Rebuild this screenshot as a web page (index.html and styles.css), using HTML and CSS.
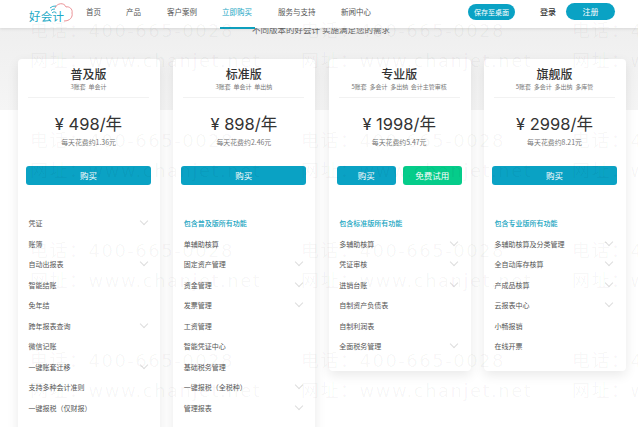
FILE: index.html
```html
<!DOCTYPE html>
<html lang="zh-CN">
<head>
<meta charset="utf-8">
<title>好会计 立即购买</title>
<link rel="stylesheet" href="styles.css">
</head>
<body>
<header class="nav">
  <svg class="logo-mark" viewBox="0 0 48 24" width="48" height="24" aria-hidden="true">
    <path d="M27 6 C29 1 36 0 38 5 C41 4 45 7 44 11 C45 15 42 19 36 19" fill="none" stroke="#e8848a" stroke-width=".9"/>
    <path d="M22 6 a8 8 0 0 1 6 -2 M23 8.500 a5 5 0 0 1 4 -1.500 M24 11 a2.500 2.500 0 0 1 2.500 -1" fill="none" stroke="#17a6c4" stroke-width=".9"/>
  </svg>
  <span class="logo-text">好会计</span>
  <nav class="menu">
    <a class="menu-item m1">首页</a>
    <a class="menu-item m2">产品</a>
    <a class="menu-item m3">客户案例</a>
    <a class="menu-item m4 active">立即购买</a>
    <a class="menu-item m5">服务与支持</a>
    <a class="menu-item m6">新闻中心</a>
  </nav>
  <i class="underline"></i>
  <span class="save-btn">保存至桌面</span>
  <span class="login">登录</span>
  <span class="register">注册</span>
</header>
<section class="band">
  <p class="slogan">不同版本的好会计 实施满足您的需求</p>
</section>
<main class="cards">
  <article class="card">
    <h2>普及版</h2><p class="sub">3账套&nbsp;&nbsp;单会计</p><hr>
    <p class="price">¥ 498/年</p><p class="daily">每天花费约1.36元</p>
    <div class="actions"><a class="btn">购买</a></div>
    <ul class="features">
      <li class="more">凭证</li><li>账簿</li><li class="more">自动出报表</li><li>智能结账</li><li>免年结</li>
      <li class="more">跨年报表查询</li><li>微信记账</li><li class="more">一键账套迁移</li><li>支持多种会计准则</li><li>一键报税（仅财报）</li>
    </ul>
  </article>
  <article class="card">
    <h2>标准版</h2><p class="sub">3账套&nbsp;&nbsp;单会计&nbsp;&nbsp;单出纳</p><hr>
    <p class="price">¥ 898/年</p><p class="daily">每天花费约2.46元</p>
    <div class="actions"><a class="btn">购买</a></div>
    <ul class="features">
      <li class="incl">包含普及版所有功能</li><li>单辅助核算</li><li class="more">固定资产管理</li><li class="more">资金管理</li><li class="more">发票管理</li>
      <li>工资管理</li><li>智能凭证中心</li><li>基础税务管理</li><li class="more">一键报税（全税种）</li><li class="more">管理报表</li>
    </ul>
  </article>
  <article class="card">
    <h2>专业版</h2><p class="sub">5账套&nbsp;&nbsp;多会计&nbsp;&nbsp;多出纳&nbsp;&nbsp;会计主管审核</p><hr>
    <p class="price">¥ 1998/年</p><p class="daily">每天花费约5.47元</p>
    <div class="actions"><a class="btn">购买</a><a class="btn green">免费试用</a></div>
    <ul class="features">
      <li class="incl">包含标准版所有功能</li><li class="more">多辅助核算</li><li class="more">凭证审核</li><li class="more">进销台账</li><li>自制资产负债表</li>
      <li>自制利润表</li><li class="more">全面税务管理</li>
    </ul>
  </article>
  <article class="card">
    <h2>旗舰版</h2><p class="sub">5账套&nbsp;&nbsp;多会计&nbsp;&nbsp;多出纳&nbsp;&nbsp;多库管</p><hr>
    <p class="price">¥ 2998/年</p><p class="daily">每天花费约8.21元</p>
    <div class="actions"><a class="btn">购买</a></div>
    <ul class="features">
      <li class="incl">包含专业版所有功能</li><li class="more">多辅助核算及分类管理</li><li class="more">全自动库存核算</li><li class="more">产成品核算</li><li class="more">云报表中心</li>
      <li>小畅报销</li><li>在线开票</li>
    </ul>
  </article>
</main>
<div class="watermark" aria-hidden="true">
  <div class="wm"><b>电话：400-665-0028</b><b>网址：www.chanjet.net</b></div>
  <div class="wm"><b>电话：400-665-0028</b><b>网址：www.chanjet.net</b></div>
  <div class="wm"><b>电话：400-665-0028</b><b>网址：www.chanjet.net</b></div>
  <div class="wm"><b>电话：400-665-0028</b><b>网址：www.chanjet.net</b></div>
  <div class="wm"><b>电话：400-665-0028</b><b>网址：www.chanjet.net</b></div>
  <div class="wm"><b>电话：400-665-0028</b><b>网址：www.chanjet.net</b></div>
  <div class="wm"><b>电话：400-665-0028</b><b>网址：www.chanjet.net</b></div>
  <div class="wm"><b>电话：400-665-0028</b><b>网址：www.chanjet.net</b></div>
  <div class="wm"><b>电话：400-665-0028</b><b>网址：www.chanjet.net</b></div>
  <div class="wm"><b>电话：400-665-0028</b><b>网址：www.chanjet.net</b></div>
  <div class="wm"><b>电话：400-665-0028</b><b>网址：www.chanjet.net</b></div>
  <div class="wm"><b>电话：400-665-0028</b><b>网址：www.chanjet.net</b></div>
</div>
</body>
</html>
```
FILE: styles.css
```css
* { box-sizing: border-box; margin: 0; padding: 0; }
html, body { height: 427px; overflow: hidden; }
body {
  position: relative;
  width: 638px;
  background: #fff;
  font-family: "Noto Sans CJK SC", "Noto Sans", sans-serif;
  color: #333;
}
.nav {
  position: relative;
  z-index: 2;
  height: 28px;
  background: #fff;
  box-shadow: 0 1px 3px rgba(0,0,0,.1);
}
.nav > *, .menu-item { position: absolute; }
.logo-mark { left: 28px; top: 2px; }
.logo-text { left: 29px; top: 8px; font-size: 11.5px; line-height: 16px; color: #22a9c6; letter-spacing: .3px; }
.menu-item { top: 4.5px; font-size: 7.5px; line-height: 14px; color: #555; white-space: nowrap; }
.m1 { left: 86px; } .m2 { left: 126px; } .m3 { left: 167px; } .m4 { left: 222px; } .m5 { left: 278px; } .m6 { left: 341px; }
.active { color: #17a6c4; }
.underline { left: 220px; top: 27px; width: 35px; height: 2px; background: #0e9fbd; }
.save-btn {
  left: 468px; top: 4px; width: 47px; height: 16px;
  background: #0aa2c4; color: #fff; border-radius: 8px;
  font-size: 7px; line-height: 16px; text-align: center;
}
.login { left: 540px; top: 5px; font-size: 8px; line-height: 14px; color: #333; font-weight: 500; }
.register {
  left: 566px; top: 3px; width: 49px; height: 17px;
  background: #0aa2c4; color: #fff; border-radius: 9px;
  font-size: 8px; line-height: 17px; text-align: center;
}
.band {
  position: relative;
  height: 82px;
  margin-bottom: -82px;
  background: linear-gradient(#efefef, #f5f5f5);
}
.slogan { position: absolute; top: -5px; left: 252px; font-size: 8.5px; line-height: 12px; color: #666; white-space: nowrap; }
.cards {
  position: relative;
  display: flex;
  gap: 13.33px;
  padding: 31px 0 0 18px;
}
.card {
  flex: none;
  width: 142px;
  height: 312px;
  padding: 6px 9px 0 8px;
  background: #fff;
  border-radius: 4px;
  box-shadow: 0 4px 12px rgba(0,0,0,.09);
}
.card:nth-child(-n+2) { height: 420px; }
.card h2 { font-size: 12px; line-height: 17px; font-weight: 500; text-align: center; color: #333; }
.sub { margin-top: 0; font-size: 6px; line-height: 9px; text-align: center; color: #777; white-space: nowrap; }
.card hr { margin: 6px 2px 0; border: 0; border-top: 1px solid #f2f2f2; }
.price { margin-top: 16px; font-family: "Inter", "Noto Sans CJK SC", sans-serif; font-size: 16.5px; line-height: 20px; text-align: center; color: #333; white-space: nowrap; }
.daily { margin-top: 3px; font-size: 6.9px; line-height: 10px; text-align: center; color: #777; }
.actions { display: flex; gap: 7px; margin-top: 19px; }
.btn {
  flex: 1;
  height: 19px;
  background: #0aa2c4;
  border-radius: 3px;
  color: #fff;
  font-size: 8.5px;
  line-height: 19px;
  text-align: center;
}
.green { background: #05cc8a; }
.features { list-style: none; margin-top: 28px; padding: 0 2px 0 2.500px; }
.features li {
  position: relative;
  height: 20.500px;
  font-size: 7px;
  line-height: 20.500px;
  color: #555;
  white-space: nowrap;
}
.features .incl { color: #14a3c0; font-weight: 500; }
.features .more::after {
  content: "";
  position: absolute;
  right: 2.500px;
  top: 5px;
  width: 5px;
  height: 5px;
  border-right: 1px solid #ddd;
  border-bottom: 1px solid #ddd;
  transform: rotate(45deg);
}
.watermark {
  position: absolute;
  z-index: 3;
  inset: 0;
  overflow: hidden;
  padding: 20px 0 0 30px;
  display: grid;
  grid-template-columns: repeat(3, 271px);
  grid-auto-rows: 110px;
  pointer-events: none;
}
.wm b {
  display: block;
  height: 30px;
  font-family: "DejaVu Sans", "Noto Sans CJK SC", sans-serif;
  font-size: 18px;
  line-height: 22px;
  font-weight: 400;
  letter-spacing: 1.500px;
  white-space: nowrap;
  color: rgba(0,0,0,.04);
}
```
